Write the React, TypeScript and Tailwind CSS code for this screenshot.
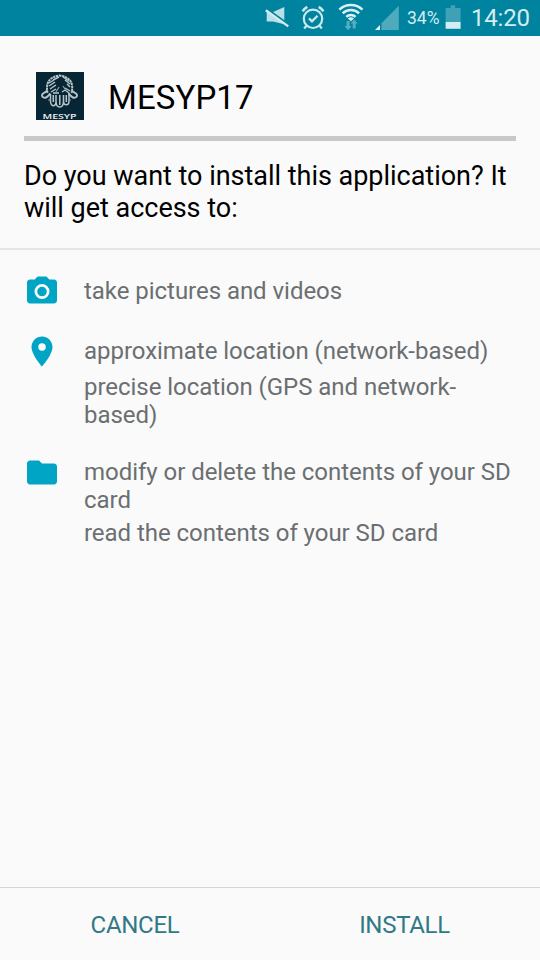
import type { ReactNode } from "react";

function StatusBar() {
  return (
    <header className="flex h-9 shrink-0 items-center bg-[#00839e] pl-[264px] text-[#d3edf2]">
      <svg width="26" height="36" viewBox="264 0 26 36" className="shrink-0">
        <path d="M266.7 12h6.3l11.3-5v17.2l-11.3-2.7h-6.3z" fill="#b9dfe7" />
        <path d="M264 7.6L290 26.3" stroke="#00839e" strokeWidth="3.4" />
        <path d="M265.8 10.2L288.3 26.4" stroke="#d3edf2" strokeWidth="2.3" />
      </svg>
      <svg width="26" height="36" viewBox="300 0 26 36" fill="none" stroke="#c8e8ee" className="ml-[10px] shrink-0">
        <circle cx="313" cy="18.8" r="9.2" strokeWidth="2.2" />
        <path d="M309 18.4l3 3 5.5-5.6" strokeWidth="2.3" />
        <path d="M302.6 11.4a13 13 0 0 1 4.7-4.5M323.4 11.4a13 13 0 0 0-4.7-4.5" strokeWidth="2.6" />
        <path d="M306.5 25.7l-2.3 2.8M319.5 25.7l2.3 2.8" strokeWidth="2.2" />
      </svg>
      <svg width="26" height="36" viewBox="338 0 26 36" fill="none" className="ml-3 shrink-0">
        <g stroke="#d9f0f4" strokeWidth="2.4">
          <path d="M339.3 9.7a16.6 16.6 0 0 1 23.2 0" />
          <path d="M342.7 13.4a11.7 11.7 0 0 1 16.4 0" />
          <path d="M346.2 16.9a6.7 6.7 0 0 1 9.4 0" />
        </g>
        <path d="M347.8 18.6a4.6 4.6 0 0 1 6.2 0l-3.1 2.6z" fill="#d9f0f4" />
        <path d="M346.6 21h3v5h2.1l-3.6 4.2-3.6-4.2h2.1zM352.7 28.6h3v-5h2.1l-3.6-4.2-3.6 4.2h2.1z" fill="#58aec0" />
      </svg>
      <svg width="26" height="36" viewBox="374 0 26 36" className="ml-[10px] shrink-0">
        <path d="M381.5 23.2L398.8 5.8V30h-17.3z" fill="#4faabc" />
        <path d="M375 30l5-5v5z" fill="#e4f5f8" />
      </svg>
      <span className="ml-[7px] w-[38px] text-[17.5px] leading-9">34%</span>
      <svg width="16" height="36" viewBox="445 0 16 36" className="shrink-0">
        <path d="M445.6 8h5v-2.7h4.6V8h5.4v14h-15z" fill="#3fa1b5" />
        <path d="M445.6 22h15v6.8h-15z" fill="#d3edf2" />
      </svg>
      <span className="ml-[10px] text-[24px] leading-9 tracking-[-0.2px]">14:20</span>
    </header>
  );
}

function AppLogo() {
  return (
    <svg width="48" height="48" viewBox="0 0 48 48" fill="none" className="shrink-0 bg-[#062635]">
      <g stroke="#b9c5ca">
        <path d="M11.5 21C9.5 11 13 5 23.5 3.5 34 5 38 11 35.5 21" strokeWidth="2" strokeDasharray="2.4 .6" />
        <path d="M11.5 18.5l-5 3.5c-2 2.5 2 5.5 5 2.5l3-3M35.5 18.5l5 3.5c2 2.5-2 5.5-5 2.5l-3-3" strokeWidth="1.9" />
        <path d="M14.5 22v8c1 6 5.5 4 5.5 0v-7M20 29c0 8 7.5 8 7.5 0v-6M27.5 29c0 5 5.5 5 5.5 0v-8" strokeWidth="1.5" />
        <path d="M23.8 23v10M17.3 23v7M30.3 23v7" strokeWidth="1.5" />
        <path d="M13 11l5-3M13 14l6-4M14 17l6-4M15 20l5-3M17 8l6-3M27 5l6 4M29 8l5 4M31 12l3 3M29 16l5 3M26 20l3-2 4 3M17 21h6" strokeWidth="1.4" />
      </g>
      <path d="M12 28h3M32 28h3M20 20l3-5M27 14l2 3" stroke="#8fa1a9" strokeWidth="1.2" />
      <text x="6.5" y="46.8" textLength="34" lengthAdjust="spacingAndGlyphs" fill="#eef3f5" className="font-['Open_Sans',sans-serif] text-[6.6px] font-semibold">MESYP</text>
    </svg>
  );
}

function Permission({ icon, children, className }: { icon: ReactNode; children: ReactNode; className: string }) {
  return (
    <li className={`flex gap-6 ${className}`}>
      <svg width="36" height="36" viewBox="0 -0.35 24 24" fill="#00a5c6" fillRule="evenodd" className="shrink-0">
        {icon}
      </svg>
      <div className="flex-1 text-[24px] leading-[28px] tracking-[-0.04px] text-[#6b6f71]">{children}</div>
    </li>
  );
}

export default function App() {
  return (
    <div className="flex h-[960px] w-[540px] flex-col overflow-hidden bg-[#fafafa] font-[Roboto,sans-serif]">
      <StatusBar />
      <div className="mx-6 flex h-[105px] shrink-0 items-center gap-6 border-b-[5px] border-[#c8c8c8] pt-5 pb-0 pl-3">
        <AppLogo />
        <h1 className="pt-[3px] text-[33px] leading-[48px] tracking-[0.1px] text-black">MESYP17</h1>
      </div>
      <p className="h-[109px] shrink-0 border-b-2 border-[#e5e5e5] pt-5 pl-6 text-[27px] leading-[31.5px] tracking-[-0.02px] text-black">
        Do you want to install this application? It<br />will get access to:
      </p>
      <ul className="flex-1 px-6 pt-[23px]">
        <Permission className="h-[60px]" icon={<path d="M9 2L7.17 4H4C2.9 4 2 4.9 2 6v12c0 1.1.9 2 2 2h16c1.1 0 2-.9 2-2V6c0-1.1-.9-2-2-2h-3.17L15 2zm3 15a5 5 0 1 1 0-10 5 5 0 0 1 0 10zm0-1.8a3.2 3.2 0 1 0 0-6.4 3.2 3.2 0 0 0 0 6.4z" />}>
          <p className="pt-1">take pictures and videos</p>
        </Permission>
        <Permission className="h-[121px]" icon={<path d="M12 2C8.13 2 5 5.13 5 9c0 5.25 7 13 7 13s7-7.75 7-13c0-3.87-3.13-7-7-7zm0 9.5a2.5 2.5 0 0 1 0-5 2.5 2.5 0 0 1 0 5z" />}>
          <p className="pt-1">approximate location (network-based)</p>
          <p className="pt-2">precise location (GPS and network-<br />based)</p>
        </Permission>
        <Permission className="h-[100px]" icon={<path d="M10 4H4c-1.1 0-1.99.9-1.99 2L2 18c0 1.1.9 2 2 2h16c1.1 0 2-.9 2-2V8c0-1.1-.9-2-2-2h-8z" />}>
          <p className="pt-1">modify or delete the contents of your SD<br />card</p>
          <p className="pt-[5px]">read the contents of your SD card</p>
        </Permission>
      </ul>
      <footer className="grid h-[73px] shrink-0 grid-cols-2 border-t border-[#d6d6d6] pt-px text-center text-[24px] tracking-[-0.3px] text-[#307987]">
        <button>CANCEL</button>
        <button className="pr-px">INSTALL</button>
      </footer>
    </div>
  );
}
